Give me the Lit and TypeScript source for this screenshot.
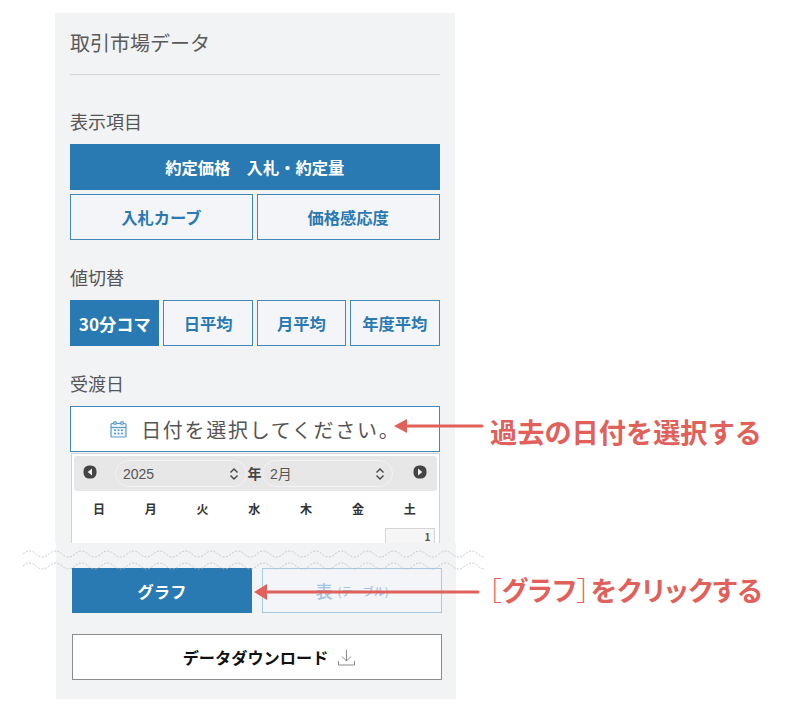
import { LitElement, html, css, svg } from "lit";
import { customElement } from "lit/decorators.js";

const wavePath = (() => {
  let d = "M0 4";
  for (let x = 0; x < 462; x += 26) {
    d += ` q6.5 -6 13 0 q6.5 6 13 0`;
  }
  return d;
})();

@customElement("app-root")
export class AppRoot extends LitElement {
  static styles = css`
    :host {
      display: block;
      position: relative;
      width: 800px;
      height: 712px;
      overflow: hidden;
      background: #fff;
      font-family: "Noto Sans CJK JP", "Noto Sans", sans-serif;
      color: #555;
    }
    .sheet { padding-top: 13px; display: flex; flex-direction: column; }
    .upper {
      margin-left: 55px; width: 400px; height: 530px; box-sizing: border-box;
      padding: 0 15.5px 0 15px; background: #f2f3f5; overflow: hidden;
    }
    .title {
      height: 62px; box-sizing: border-box; padding-top: 15px; border-bottom: 1px solid #d6d6d8;
      font-size: 20px; line-height: 30px; color: #5a5a5a;
    }
    .label { font-size: 18px; line-height: 26px; color: #555; margin-bottom: 10px; }
    .label.first { margin-top: 33px; }
    .label.next { margin-top: 24px; }
    .label.date { margin-top: 24px; }
    .stack { display: flex; flex-direction: column; gap: 4px; }
    .row { display: grid; gap: 4px; }
    .two { grid-template-columns: 1fr 1fr; }
    .four { grid-template-columns: repeat(4, 1fr); }
    .btn {
      height: 46px; box-sizing: border-box; display: flex; align-items: center; justify-content: center;
      border: 1px solid #4189bb; background: #f4f5f8; color: #2979b2; font-size: 16.3px; font-weight: 700;
      white-space: nowrap;
    }
    .btn.on { background: #2979b2; border-color: #2979b2; color: #fff; }
    .btn.main { white-space: pre; }
    .four .btn { padding: 0; }
    .four .btn.on { font-size: 17.2px; }
    .input {
      height: 46px; box-sizing: border-box; background: #fff; border: 1px solid #4189bb;
      display: flex; align-items: center; justify-content: center; gap: 13px;
      font-size: 20px; letter-spacing: 1.7px; color: #555;
    }
    .input svg { width: 19px; height: 19px; flex: none; }
    .cal {
      margin-top: 1px; height: 100px; box-sizing: border-box; background: #fff;
      border: 1px solid #d2d2d2; border-bottom: none; padding: 2px 2px 0 2px; margin-left: 1px;
    }
    .cal-head {
      height: 35px; border-radius: 3px; background: #e7e7e8; display: grid;
      grid-template-columns: 41px 132px 15px 131px 1fr; align-items: center; box-sizing: border-box;
    }
    .nav { display: flex; justify-content: center; }
    .nav.prev { justify-content: flex-start; padding-left: 9px; }
    .nav.nxt { justify-content: flex-end; padding-right: 10px; }
    .nav svg { width: 14px; height: 14px; display: block; margin-top: -3px; }
    .pill {
      height: 27px; box-sizing: border-box; border: 1.5px solid #f3f3f3; border-radius: 14px;
      display: flex; align-items: center; justify-content: space-between; padding: 0 6px 0 7px;
      font-family: "Liberation Sans", "Noto Sans CJK JP", sans-serif;
      font-size: 14px; line-height: 18px; color: #555;
    }
    .pill svg { width: 12px; height: 14px; }
    .nen { font-size: 14px; font-weight: 700; color: #444; text-align: center; line-height: 25px; }
    .weeks {
      display: grid; grid-template-columns: repeat(7, 51.8px); font-size: 12px; font-weight: 700;
      color: #333; text-align: center; padding-top: 8px; line-height: 20px; margin-left: -1px;
    }
    .cells { display: flex; justify-content: flex-end; margin-top: 9px; padding-right: 2px; }
    .cell {
      width: 50px; height: 15px; box-sizing: border-box; border: 1px solid #d4d4d4; border-bottom: none; background: #f6f6f6;
      font-size: 10px; font-weight: 700; color: #555; text-align: right; padding: 3px 3px 0 0; line-height: 10px;
    }
    .lower {
      margin-left: 56px; width: 400px; height: 156px; box-sizing: border-box; background: #f2f3f5;
      padding: 25px 15px 0 16px;
    }
    .pair { display: grid; grid-template-columns: 180px 180px; gap: 10px; }
    .pair .btn { height: 45px; }
    .ghost {
      border-color: #a9c8e2 !important; color: #a3c4de !important; font-size: 17px !important; gap: 5px; font-weight: 500 !important;
    }
    .ghost small { font-size: 11px; }
    .dl {
      margin-top: 21px; height: 46px; width: 370px; box-sizing: border-box; background: #fff; border: 1px solid #8c8c8c;
      display: flex; align-items: center; justify-content: center; gap: 9px; font-size: 16.2px; font-weight: 700; color: #111;
      padding-left: 25px;
    }
    .dl svg { width: 19px; height: 19px; }
    .wave { position: absolute; left: 23px; width: 462px; height: 8px; }
    .w1 { top: 539px; }
    .w2 { top: 551px; }
    .note {
      position: absolute; color: #e2605a; font-weight: 700; font-size: 27.2px; line-height: 40px; white-space: nowrap;
    }
    .n1 { left: 490px; top: 411px; }
    .n2 { left: 488px; top: 570px; font-size: 27px; letter-spacing: 0.35px; font-feature-settings: "palt"; display: flex; align-items: center; }
    .br { font-weight: 300; }
    .arrow { position: absolute; }
    .a1 { left: 392px; top: 416px; width: 92px; height: 20px; }
    .a2 { left: 252px; top: 582px; width: 228px; height: 20px; }
  `;

  render() {
    const chev = svg`<path d="M2.5 5.5 6 2l3.5 3.5M2.5 8.5 6 12l3.5-3.5" fill="none" stroke="#444" stroke-width="1.4"/>`;
    const wave = html`<svg viewBox="0 0 462 8" fill="none"><path d=${wavePath} stroke="#bbb" stroke-width="0.8" stroke-dasharray="2 1.5"/></svg>`;
    return html`
      <div class="sheet">
        <div class="upper">
          <div class="title">取引市場データ</div>
          <div class="label first">表示項目</div>
          <div class="stack">
            <div class="btn on main">約定価格　入札・約定量</div>
            <div class="row two">
              <div class="btn">入札カーブ</div>
              <div class="btn">価格感応度</div>
            </div>
          </div>
          <div class="label next">値切替</div>
          <div class="row four">
            <div class="btn on">30分コマ</div>
            <div class="btn">日平均</div>
            <div class="btn">月平均</div>
            <div class="btn">年度平均</div>
          </div>
          <div class="label date">受渡日</div>
          <div class="input">
            <svg viewBox="0 0 19 19" fill="none" stroke="#5a9bd0" stroke-width="1.2">
              <rect x="2" y="3.5" width="15" height="13.5" rx="1" fill="#eef5fb"/>
              <path d="M2 7.5h15" />
              <circle cx="6" cy="3" r="1.4" fill="#fff"/>
              <circle cx="13" cy="3" r="1.4" fill="#fff"/>
              <path d="M5 10.2h2M8.5 10.2h2M12 10.2h2M5 13.6h2M8.5 13.6h2M12 13.6h2" stroke-width="1.5"/>
            </svg>
            <span>日付を選択してください。</span>
          </div>
          <div class="cal">
            <div class="cal-head">
              <div class="nav prev"><svg viewBox="0 0 14 14"><rect x="0.5" y="0.5" width="13" height="13" rx="5.5" fill="#444"/><path d="M9 3.5v7L4.6 7z" fill="#eee"/></svg></div>
              <div class="pill"><span>2025</span><svg viewBox="0 0 12 14">${chev}</svg></div>
              <div class="nen">年</div>
              <div class="pill"><span>2月</span><svg viewBox="0 0 12 14">${chev}</svg></div>
              <div class="nav nxt"><svg viewBox="0 0 14 14"><rect x="0.5" y="0.5" width="13" height="13" rx="5.5" fill="#444"/><path d="M5 3.5v7L9.4 7z" fill="#eee"/></svg></div>
            </div>
            <div class="weeks">
              <span>日</span><span>月</span><span>火</span><span>水</span><span>木</span><span>金</span><span>土</span>
            </div>
            <div class="cells"><div class="cell">1</div></div>
          </div>
        </div>
        <div class="lower">
          <div class="pair">
            <div class="btn on">グラフ</div>
            <div class="btn ghost"><span>表</span><small>(テーブル)</small></div>
          </div>
          <div class="dl">
            <span>データダウンロード</span>
            <svg viewBox="0 0 19 19" fill="none" stroke="#8a8a8a" stroke-width="1">
              <path d="M9.5 2v11M5 8.5l4.5 4.5L14 8.5M1.5 13v4h16v-4"/>
            </svg>
          </div>
        </div>
      </div>
      <div class="wave w1">${wave}</div>
      <div class="wave w2">${wave}</div>
      <svg class="arrow a1" viewBox="0 0 92 20"><path d="M14 10h76" stroke="#e2605a" stroke-width="3" stroke-linecap="round"/><path d="M2 10l13-7v14z" fill="#e2605a"/></svg>
      <svg class="arrow a2" viewBox="0 0 228 20"><path d="M14 10h212" stroke="#e2605a" stroke-width="3" stroke-linecap="round"/><path d="M2 10l13-8v16z" fill="#e2605a"/></svg>
      <div class="note n1">過去の日付を選択する</div>
      <div class="note n2"><span class="br">［</span><span>グラフ</span><span class="br">］</span><span>をクリックする</span></div>
    `;
  }
}
